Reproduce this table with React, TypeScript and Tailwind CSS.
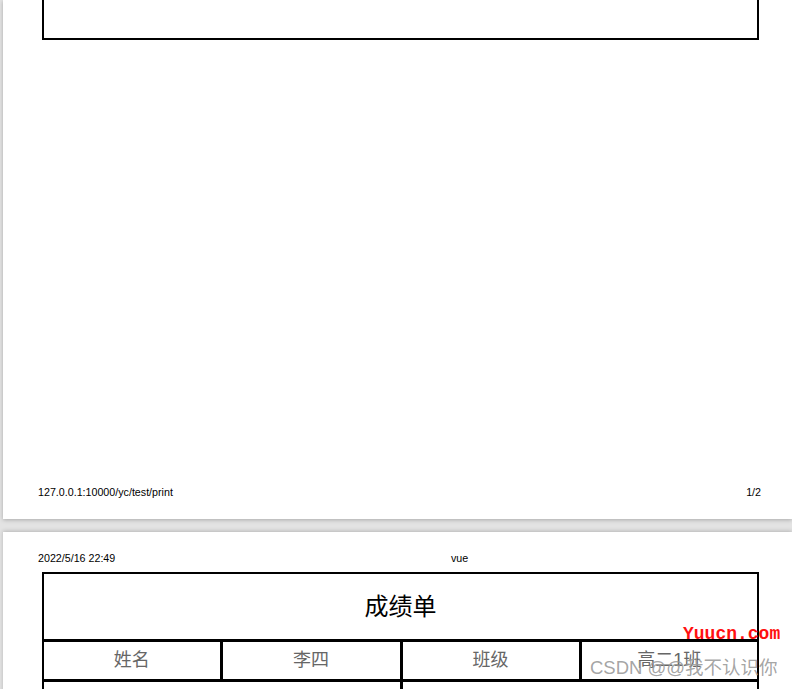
const cjk = "font-['Liberation_Sans','Noto_Sans_CJK_SC',sans-serif]";

export default function App() {
  return (
    <div className={`h-[689px] w-[792px] overflow-hidden bg-[#e3e3e3] pl-[3px] ${cjk}`}>
      {/* page 1 (tail) */}
      <div className="flex h-[519px] flex-col bg-white shadow-[0_1px_4px_rgba(0,0,0,0.25)]">
        <div className="ml-[39px] h-[40px] w-[717px] border-2 border-t-0 border-black" />
        <div className="flex-1" />
        <div className="mb-[20px] flex items-center justify-between pl-[35px] pr-[31px] text-[10.7px] leading-[14px] text-black">
          <span>127.0.0.1:10000/yc/test/print</span>
          <span>1/2</span>
        </div>
      </div>

      {/* page 2 */}
      <div className="relative mt-[13px] h-[200px] bg-white pt-[19px] shadow-[0_-1px_4px_rgba(0,0,0,0.2)]">
        <div className="flex items-center pl-[35px] text-[10.7px] leading-[14px] text-black">
          <span className="w-[413px]">2022/5/16 22:49</span>
          <span>vue</span>
        </div>
        <table className="ml-[39px] mt-[7px] w-[717px] border-collapse border-2 border-black">
          <tbody>
            <tr>
              <td colSpan={4} className="h-[67px] border-2 border-black pt-[2px] text-center text-[24px] text-black">
                成绩单
              </td>
            </tr>
            <tr className="text-[18px] text-[#666]">
              <td className="h-[40px] w-[178px] border-[3px] border-l-2 border-black text-center">姓名</td>
              <td className="w-[180px] border-[3px] border-black text-center">李四</td>
              <td className="w-[179px] border-[3px] border-black text-center">班级</td>
              <td className="border-[3px] border-r-2 border-black text-center">高二1班</td>
            </tr>
            <tr>
              <td colSpan={2} className="h-[40px] border-[3px] border-l-2 border-black" />
              <td colSpan={2} className="border-[3px] border-r-2 border-black" />
            </tr>
          </tbody>
        </table>

        {/* watermark */}
        <div className="absolute left-[680px] top-[92px] font-['Liberation_Mono',monospace] text-[18px] font-bold leading-[20px] text-[#ff1010]">
          Yuucn.com
        </div>
        <div className="absolute left-[587px] top-[124px] whitespace-nowrap text-[18.5px] leading-[24px] text-[#9a9a9a]/90">
          CSDN @@我不认识你
        </div>
      </div>
    </div>
  );
}
